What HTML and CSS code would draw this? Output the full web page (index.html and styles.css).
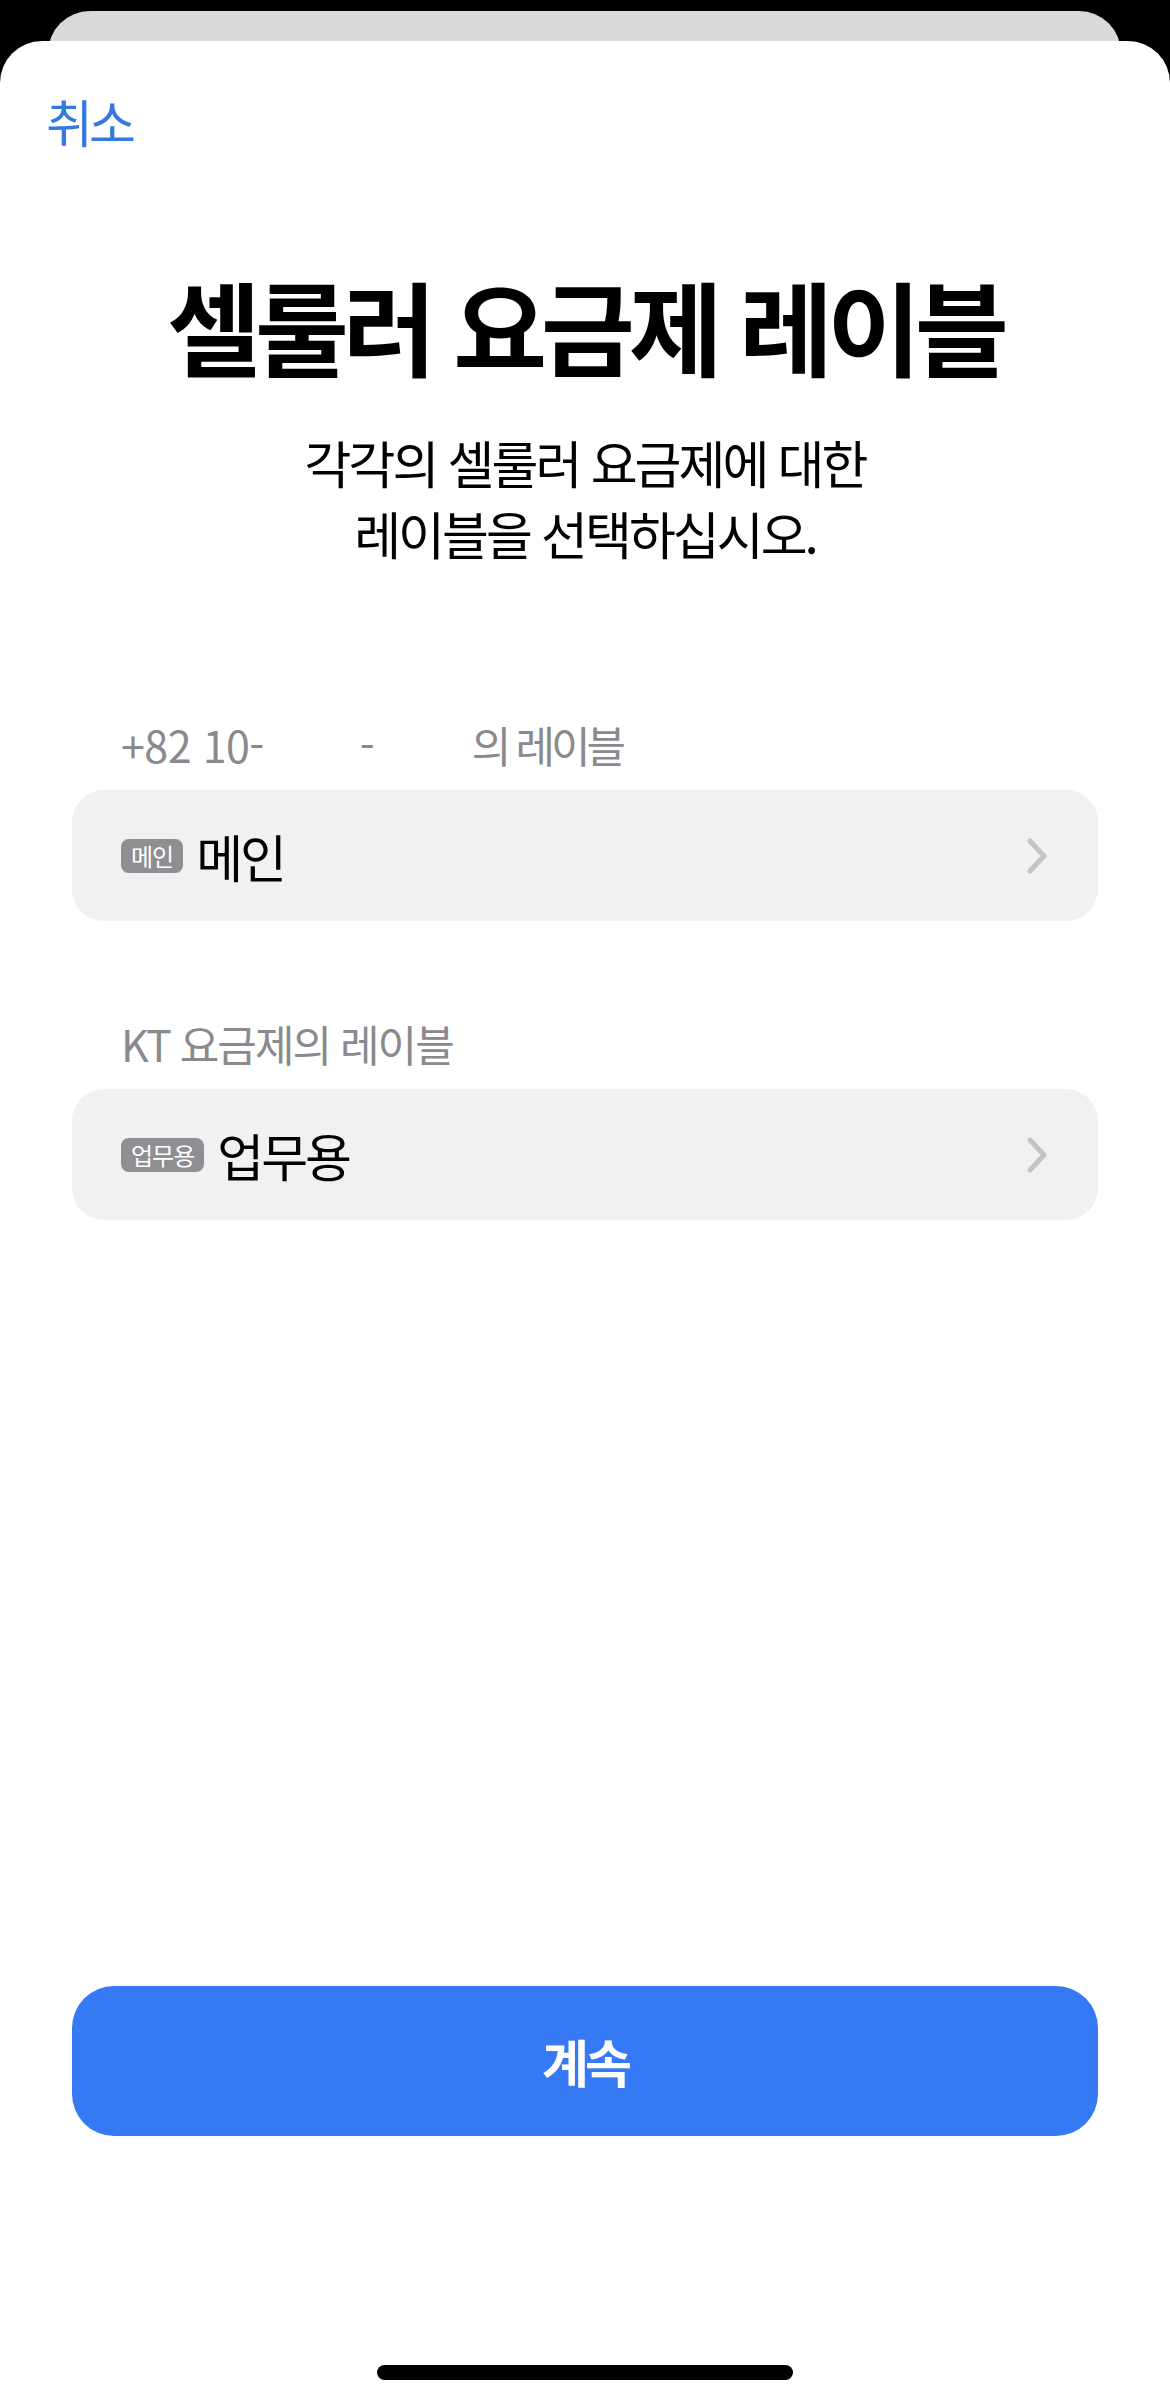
FILE: index.html
```html
<!DOCTYPE html>
<html lang="ko">
<head>
<meta charset="utf-8">
<title>셀룰러 요금제 레이블</title>
<link rel="stylesheet" href="styles.css">
</head>
<body>
<div class="backcard"></div>
<main class="sheet">
  <nav class="nav"><span class="cancel">취소</span></nav>
  <h1 class="title">셀룰러 요금제 레이블</h1>
  <p class="subtitle">각각의 셀룰러 요금제에 대한<br>레이블을 선택하십시오.</p>

  <div class="label first"><span class="num">+82 10-</span><span class="dash">-</span><span class="tail">의 레이블</span></div>
  <div class="row">
    <span class="badge">메인</span>
    <span class="row-text">메인</span>
    <svg class="chev" width="26" height="40" viewBox="0 0 26 40"><path d="M6 5 L20 20 L6 35" fill="none" stroke="#c4c4c7" stroke-width="5" stroke-linecap="round" stroke-linejoin="round"/></svg>
  </div>

  <div class="label second">KT 요금제의 레이블</div>
  <div class="row">
    <span class="badge">업무용</span>
    <span class="row-text">업무용</span>
    <svg class="chev" width="26" height="40" viewBox="0 0 26 40"><path d="M6 5 L20 20 L6 35" fill="none" stroke="#c4c4c7" stroke-width="5" stroke-linecap="round" stroke-linejoin="round"/></svg>
  </div>

  <button class="continue">계속</button>
  <div class="home"></div>
</main>
</body>
</html>
```
FILE: styles.css
```css
html, body {
  margin: 0;
  padding: 0;
  background: #000;
}
body {
  width: 1170px;
  height: 2402px;
  overflow: hidden;
  position: relative;
  font-family: "Noto Sans CJK KR", "Noto Sans", sans-serif;
  color: #000;
}
.backcard {
  margin: 11px 0 0 48px;
  width: 1073px;
  height: 60px;
  background: #d9d9d9;
  border-radius: 42px 42px 0 0;
}
.sheet {
  position: absolute;
  top: 41px;
  left: 0;
  width: 1170px;
  height: 2361px;
  background: #fff;
  border-radius: 42px 42px 0 0;
  box-sizing: border-box;
  padding: 0 72px;
  display: flex;
  flex-direction: column;
}
.nav {
  margin-top: 50px;
  height: 60px;
  margin-left: -26px;
  display: flex;
  align-items: center;
}
.cancel {
  font-size: 51px;
  line-height: 60px;
  color: #3579e0;
  letter-spacing: -4px;
}
.title {
  margin: 114px 0 0;
  font-size: 102px;
  line-height: 120px;
  font-weight: 700;
  text-align: center;
  letter-spacing: -6px;
}
.subtitle {
  margin: 42px 0 0;
  font-size: 51px;
  line-height: 71px;
  text-align: center;
  letter-spacing: -3px;
}
.label {
  font-size: 43px;
  line-height: 50px;
  color: #8a8a8e;
  padding-left: 49px;
  letter-spacing: -2px;
  display: flex;
}
.label .num { letter-spacing: -0.5px; font-size: 43px; }
.label .dash { margin-left: 96px; font-size: 43px; }
.label .tail { margin-left: 99px; letter-spacing: -4px; }
.label.first { margin-top: 150px; }
.label.second { margin-top: 97px; }
.row {
  margin-top: 21px;
  height: 131px;
  background: #f1f1f2;
  border-radius: 32px;
  display: flex;
  align-items: center;
  padding: 0 48px 0 49px;
}
.badge {
  height: 34px;
  line-height: 34px;
  padding: 0 10px;
  background: #8e8e93;
  color: #fff;
  border-radius: 8px;
  font-size: 24px;
  letter-spacing: -1px;
}
.row-text {
  margin-left: 13px;
  font-size: 51px;
  line-height: 60px;
  letter-spacing: -3px;
  flex: 1;
}
.chev { display: block; }
.continue {
  margin-top: 766px;
  height: 150px;
  border: none;
  border-radius: 42px;
  background: #3579f4;
  color: #fff;
  font-family: inherit;
  font-size: 51px;
  font-weight: 600;
  letter-spacing: -4px;
  padding: 0;
}
.home {
  margin: 229px auto 0;
  width: 416px;
  height: 15px;
  border-radius: 8px;
  background: #000;
}
```
